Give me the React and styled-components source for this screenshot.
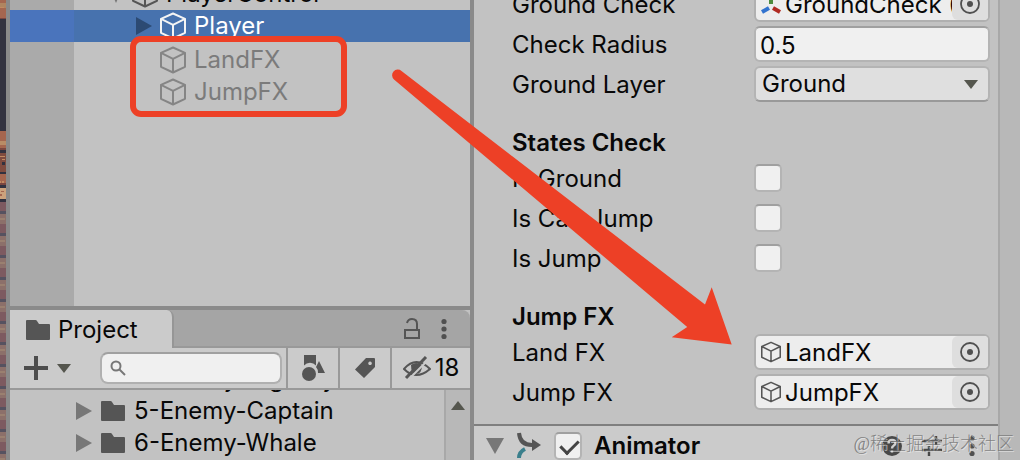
import styled, { createGlobalStyle } from "styled-components";

const bricks = [
  [0, 3, "#a5664f"],
  [3, 5, "#b08560"],
  [8, 10, "#a5664f"],
  [18, 1, "#7a4640"],
  [19, 112, "#323240"],
  [131, 10, "#a5664f"],
  [141, 4, "#b98c66"],
  [145, 3, "#a5664f"],
  [148, 2, "#7a4640"],
  [150, 3, "#323240"],
  [153, 19, "#7f4c40"],
  [172, 2, "#323240"],
  [174, 9, "#a5664f"],
  [183, 2, "#7a4640"],
  [185, 3, "#323240"],
  [188, 11, "#cda27c"],
  [199, 3, "#323240"],
];

const fadedTops = [202, 224, 246, 268, 290, 312, 333, 355, 377, 398, 420, 442];

function Cube({ size = 28 }) {
  return (
    <svg width={size - 2} height={size} viewBox="0 0 26 28" fill="none">
      <path
        d="M13 1.5 25 6.8v14L13 26.5 1 20.8v-14zM1 6.8l12 6 12-6M13 12.8v13.7"
        stroke="currentColor"
        strokeWidth="2"
        strokeLinejoin="round"
      />
    </svg>
  );
}

function Triangle({ down, w = 16, h = 18 }) {
  return (
    <svg width={w} height={h} viewBox="0 0 16 18" preserveAspectRatio="none">
      <path d={down ? "M0 0h16L8 18z" : "M0 0v18l16-9z"} fill="currentColor" />
    </svg>
  );
}

function Folder() {
  return (
    <svg width="24" height="20" viewBox="0 0 24 20">
      <path
        d="M1 0h8.500q1 0 1.500 1l2 3h10q1 0 1 1v14q0 1-1 1H1q-1 0-1-1V1q0-1 1-1z"
        fill="#555"
      />
    </svg>
  );
}

function Dots() {
  return (
    <svg width="6" height="22" viewBox="0 0 6 22" fill="#505050">
      <circle cx="3" cy="3.500" r="2.600" />
      <circle cx="3" cy="11" r="2.600" />
      <circle cx="3" cy="18.500" r="2.600" />
    </svg>
  );
}

function Brickwork() {
  return (
    <svg width="6" height="460" viewBox="0 0 6 460" shapeRendering="crispEdges">
      {bricks.map(([y, h, fill]) => (
        <rect key={y} y={y} width="6" height={h} fill={fill} />
      ))}
      <path
        d="M0 7h4v1H0zM0 156h5v1H0zM2 159h3v1H2zM0 181h1v2H0zM2 181h2v2H2z"
        fill="#c28a62"
      />
      <path d="M2 162h3v3H2z" fill="#323240" />
      <path d="M1 191h3v1H1zM0 194h2v2H0z" fill="#a5664f" />
      <rect y="202" width="6" height="258" fill="#8c706a" />
      {fadedTops.map((y) => (
        <g key={y}>
          <rect y={y} width="6" height="9" fill="#7d5a60" />
          <rect y={y + 9} width="6" height="3" fill="#565260" />
          <rect y={y + 16} width="5" height="2" fill="#9a8070" />
        </g>
      ))}
    </svg>
  );
}

function ObjectField({ id, label, value, icon }) {
  return (
    <Property>
      <label htmlFor={id}>{label}</label>
      <ObjectBox>
        {icon || <Cube size={22} />}
        <input id={id} defaultValue={value} />
        <button aria-label={`Select ${label}`}>
          <svg width="20" height="20" viewBox="0 0 20 20">
            <circle cx="10" cy="10" r="9" fill="none" stroke="#505050" strokeWidth="1.800" />
            <circle cx="10" cy="10" r="3" fill="#505050" />
          </svg>
        </button>
      </ObjectBox>
    </Property>
  );
}

function CheckField({ id, label }) {
  return (
    <Property>
      <label htmlFor={id}>{label}</label>
      <Checkbox id={id} type="checkbox" />
    </Property>
  );
}

function Hierarchy() {
  return (
    <HierarchyPanel>
      <Gutter>
        <GutterMark />
      </Gutter>
      <Tree>
        <TreeRow $indent={34}>
          <Triangle down />
          <Cube />
          <span>PlayerControl</span>
        </TreeRow>
        <TreeRow $indent={62} $selected>
          <Triangle />
          <Cube />
          <span>Player</span>
        </TreeRow>
        <TreeRow $indent={86} $disabled>
          <Cube />
          <span>LandFX</span>
        </TreeRow>
        <TreeRow $indent={86} $disabled>
          <Cube />
          <span>JumpFX</span>
        </TreeRow>
        <Highlight />
      </Tree>
    </HierarchyPanel>
  );
}

function Project() {
  return (
    <ProjectPanel>
      <TabBar>
        <Tab>
          <Folder />
          Project
        </Tab>
        <TabTools>
          <button aria-label="Lock">
            <svg width="18" height="22" viewBox="0 0 18 22" fill="none" stroke="#555" strokeWidth="2">
              <rect x="2" y="12" width="14" height="8" />
              <path d="M4 5q1-4 5-4 5 0 5 5v6" />
            </svg>
          </button>
          <button aria-label="Panel menu">
            <Dots />
          </button>
        </TabTools>
      </TabBar>
      <Toolbar>
        <AddButton aria-label="Create">
          <svg width="24" height="24" viewBox="0 0 24 24">
            <path d="M12 0v24M0 12h24" stroke="#4d4d4d" strokeWidth="4" />
          </svg>
          <Triangle down w={14} h={9} />
        </AddButton>
        <Search>
          <svg width="16" height="16" viewBox="0 0 16 16" fill="none" stroke="#777" strokeWidth="2">
            <circle cx="6" cy="6" r="4.500" />
            <path d="m9 9 6 6" />
          </svg>
          <input type="search" aria-label="Search project" />
        </Search>
        <ToolButton aria-label="Search by type">
          <svg width="24" height="28" viewBox="0 0 24 28" fill="#555">
            <path d="M3 1h12v10.500a8 8 0 0 0-12 0zM18 7l6 12h-7q0-4-2-6z" />
            <circle cx="8" cy="20" r="7" />
          </svg>
        </ToolButton>
        <ToolButton aria-label="Search by label">
          <svg width="20" height="20" viewBox="0 0 20 20" fill="#555">
            <path
              fillRule="evenodd"
              d="M11 0h8q1 0 1 1v8L9 20 0 11.500zM15 3.500a1.800 1.800 0 1 0 .1 0z"
            />
          </svg>
        </ToolButton>
        <ToolButton $wide aria-label="Hidden packages">
          <svg width="28" height="24" viewBox="0 0 28 24" fill="none" stroke="#555" strokeWidth="2">
            <path d="M1 13Q13-1 27 13 13 25 1 13z" />
            <path d="M8 9q0 9 5 9 6 0 6-9-6-4-11 0z" fill="#555" stroke="none" />
            <path d="M5 24 26 3" stroke="#cbcbcb" strokeWidth="2" />
            <path d="M3 22 23 1" strokeWidth="3" />
          </svg>
          18
        </ToolButton>
      </Toolbar>
      <Browser>
        <FileList>
          <FileRow>
            <Triangle />
            <Folder />
            4-Enemy-Big Guy
          </FileRow>
          <FileRow>
            <Triangle />
            <Folder />
            5-Enemy-Captain
          </FileRow>
          <FileRow>
            <Triangle />
            <Folder />
            6-Enemy-Whale
          </FileRow>
        </FileList>
        <ListScroll>
          <svg width="14" height="9" viewBox="0 0 14 9">
            <path d="M7 0l7 9H0z" fill="#55564e" />
          </svg>
        </ListScroll>
      </Browser>
    </ProjectPanel>
  );
}

function Inspector() {
  return (
    <InspectorPanel>
      <Properties>
        <ObjectField
          id="ground-check"
          label="Ground Check"
          value="GroundCheck (Transform)"
          icon={
            <svg width="20" height="22" viewBox="0 0 20 22" strokeWidth="4" fill="none">
              <path d="M10 1v10" stroke="#4d8b3d" />
              <path d="m8 15-7 4" stroke="#3273cf" />
              <path d="m12 15 7 4" stroke="#b02a22" />
            </svg>
          }
        />
        <Property>
          <label htmlFor="radius">Check Radius</label>
          <TextInput id="radius" defaultValue="0.5" />
        </Property>
        <Property>
          <label htmlFor="layer">Ground Layer</label>
          <SelectBox>
            <select id="layer" defaultValue="Ground">
              <option>Ground</option>
            </select>
            <Triangle down w={14} h={9} />
          </SelectBox>
        </Property>
        <Heading>States Check</Heading>
        <CheckField id="is-ground" label="Is Ground" />
        <CheckField id="is-can-jump" label="Is Can Jump" />
        <CheckField id="is-jump" label="Is Jump" />
        <Heading>Jump FX</Heading>
        <ObjectField id="land-fx" label="Land FX" value="LandFX" />
        <ObjectField id="jump-fx" label="Jump FX" value="JumpFX" />
      </Properties>
      <ComponentHeader>
        <Triangle down w={18} h={16} />
        <svg width="26" height="28" viewBox="0 0 26 28" fill="none" strokeWidth="4">
          <path d="M3 1q1 12 13 12" stroke="#555" />
          <path d="M16 7v12l9-6z" fill="#555" />
          <path d="M3 26q0-6 6-9" stroke="#3a7f8c" />
        </svg>
        <Checkbox id="animator" type="checkbox" defaultChecked />
        <label htmlFor="animator">Animator</label>
        <HeaderTools>
          <button aria-label="Help">
            <svg width="20" height="20" viewBox="0 0 20 20">
              <circle cx="10" cy="10" r="10" fill="#484848" />
              <path
                d="M6.500 7.500q0-3.500 3.500-3.500t3.500 3q0 1.500-2 2.800Q10 10.500 10 12.500M10 14v2.500"
                fill="none"
                stroke="#d0d0d0"
                strokeWidth="2.400"
              />
            </svg>
          </button>
          <button aria-label="Presets">
            <svg width="20" height="20" viewBox="0 0 20 20" stroke="#484848" strokeWidth="2.400">
              <path d="M0 5h20M0 14h20M14 0v9M7 10v10" />
            </svg>
          </button>
          <button aria-label="Component menu">
            <Dots />
          </button>
        </HeaderTools>
      </ComponentHeader>
    </InspectorPanel>
  );
}

export default function App() {
  return (
    <>
      <GlobalStyle />
      <Editor>
        <SceneEdge>
          <Brickwork />
        </SceneEdge>
        <LeftDock>
          <Hierarchy />
          <Project />
        </LeftDock>
        <Inspector />
        <InspectorScroll />
        <Arrow viewBox="0 0 340 280">
          <path
            d="M11.500 2 315 235.500l6.700-17.300L341.700 275.500l-60-7.200 15.500-10.300L4 10.500A5.500 5.500 0 0 1 11.500 2z"
            fill="#ed4026"
          />
        </Arrow>
        <Watermark>@稀土掘金技术社区</Watermark>
      </Editor>
    </>
  );
}

const GlobalStyle = createGlobalStyle`
  * {
    box-sizing: border-box;
  }

  body {
    margin: 0;
    background: #8a8a8a;
    color: #080808;
    font-family: Inter, sans-serif;
    font-size: 24px;
    line-height: 30px;
  }

  button, input, select {
    margin: 0;
    padding: 0;
    border: 0;
    background: none;
    color: inherit;
    font: inherit;
    outline: none;
  }

  svg {
    display: block;
    flex-shrink: 0;
  }
`;

const Editor = styled.main`
  position: relative;
  display: grid;
  grid-template-columns: 6px minmax(0, 117fr) minmax(0, 131fr) 22px;
  grid-template-rows: minmax(0, 1fr);
  height: 100vh;
  overflow: hidden;
`;

const SceneEdge = styled.div`
  overflow: hidden;
  background: #8c706a;
`;

const LeftDock = styled.div`
  display: grid;
  grid-template-rows: minmax(0, 51fr) minmax(0, 25fr);
  gap: 4px;
  min-height: 0;
  margin: 0 4px;
`;

const HierarchyPanel = styled.section`
  display: flex;
  overflow: hidden;
  background: #c2c2c2;
`;

const Gutter = styled.div`
  width: 64px;
  padding-top: 10px;
  background: #aaa;
`;

const GutterMark = styled.div`
  height: 32px;
  background: #4a74bc;
`;

const Tree = styled.div`
  position: relative;
  flex: 1;
  margin-top: -22px;
`;

const TreeRow = styled.div`
  display: flex;
  align-items: center;
  gap: 8px;
  height: 32px;
  padding-top: ${({ $disabled }) => ($disabled ? 3 : 0)}px;
  padding-left: ${({ $indent }) => $indent}px;
  background: ${({ $selected }) => ($selected ? "#4772ae" : "transparent")};
  color: ${({ $selected, $disabled }) =>
    $selected ? "#fff" : $disabled ? "#7b7b7b" : "#080808"};

  svg {
    color: ${({ $selected, $disabled }) =>
      $selected ? "#f4f4f4" : $disabled ? "#858585" : "#555"};
  }

  svg:first-child:not(:nth-last-child(2)) {
    color: ${({ $selected }) => ($selected ? "#2c4a73" : "#777")};
  }
`;

const Highlight = styled.div`
  position: absolute;
  top: 58px;
  left: 56px;
  width: 217px;
  height: 81px;
  border: 6px solid #ed4026;
  border-radius: 11px;
`;

const ProjectPanel = styled.section`
  display: flex;
  flex-direction: column;
  overflow: hidden;
  background: #c2c2c2;
`;

const TabBar = styled.header`
  display: flex;
  justify-content: space-between;
  flex-shrink: 0;
  height: 38px;
  background: #a5a5a5;
  border-radius: 0 8px 0 0;
  box-shadow: inset 0 -2px #999;
`;

const Tab = styled.div`
  display: flex;
  align-items: center;
  gap: 8px;
  padding: 2px 34px 0 16px;
  border-right: 2px solid #969696;
  border-radius: 0 7px 0 0;
  background: #cbcbcb;
`;

const TabTools = styled.div`
  display: flex;
  align-items: center;
  gap: 20px;
  padding-right: 23px;
`;

const Toolbar = styled.div`
  display: flex;
  flex-shrink: 0;
  align-items: center;
  height: 42px;
  border-bottom: 2px solid #999;
  background: #cbcbcb;
`;

const AddButton = styled.button`
  display: flex;
  align-items: center;
  gap: 9px;
  margin: 0 29px 0 14px;
  color: #55564e;
`;

const Search = styled.label`
  display: flex;
  flex: 1;
  align-items: center;
  gap: 8px;
  min-width: 0;
  height: 32px;
  margin-right: 4px;
  padding: 0 8px;
  border: 2px solid #b0b0b0;
  border-top-color: #a0a0a0;
  border-radius: 8px;
  background: #f0f0f0;

  input {
    width: 100%;
    min-width: 0;
  }
`;

const ToolButton = styled.button`
  display: flex;
  align-items: center;
  justify-content: center;
  gap: 4px;
  width: ${({ $wide }) => ($wide ? 80 : 52)}px;
  height: 40px;
  border-left: 2px solid #999;
`;

const Browser = styled.div`
  display: flex;
  flex: 1;
  min-height: 0;
  overflow: hidden;
`;

const FileList = styled.div`
  flex: 1;
  margin-top: -27px;
`;

const FileRow = styled.div`
  display: flex;
  align-items: center;
  gap: 9px;
  height: 32px;
  padding-left: 66px;

  svg:first-child {
    color: #777;
  }
`;

const ListScroll = styled.div`
  display: flex;
  justify-content: center;
  width: 26px;
  padding-top: 11px;
  border-left: 2px solid #a8a8a8;
  background: #b8b8b8;
`;

const InspectorPanel = styled.section`
  min-width: 0;
  overflow: hidden;
  background: #c2c2c2;
`;

const Properties = styled.div`
  margin-top: -16px;
  padding: 0 8px 12px 38px;
`;

const Property = styled.div`
  display: grid;
  grid-template-columns: 242px minmax(0, 1fr);
  align-items: center;
  height: 40px;

  label {
    padding-top: 2px;
  }
`;

const Heading = styled.h2`
  margin: 0;
  padding-top: 24px;
  font-size: 24px;
  font-weight: 600;
  line-height: 30px;
`;

const TextInput = styled.input`
  width: 100%;
  height: 36px;
  padding: 2px 4px 0;
  border: 2px solid #b4b4b4;
  border-top-color: #a0a0a0;
  border-radius: 6px;
  background: #f0f0f0;
`;

const ObjectBox = styled.div`
  display: flex;
  align-items: center;
  height: 36px;
  padding-left: 5px;
  overflow: hidden;
  border: 2px solid #b0b0b0;
  border-radius: 6px;
  background: #ededed;
  color: #555;

  input {
    flex: 1;
    min-width: 0;
    padding: 2px 0 0 4px;
    color: #080808;
  }

  button {
    display: flex;
    align-items: center;
    justify-content: center;
    width: 36px;
    height: 32px;
    border-radius: 6px 0 0 6px;
    background: #dedede;
  }
`;

const SelectBox = styled.div`
  display: flex;
  align-items: center;
  height: 36px;
  padding: 0 10px 0 6px;
  border: 2px solid #b4b4b4;
  border-bottom-color: #999;
  border-radius: 6px;
  background: #dfdfdf;

  select {
    flex: 1;
    appearance: none;
  }

  svg {
    color: #55564e;
  }
`;

const Checkbox = styled.input`
  appearance: none;
  width: 28px;
  height: 28px;
  margin: 0;
  border: 2px solid #b4b4b4;
  border-top-color: #a0a0a0;
  border-radius: 5px;
  background: #f0f0f0;

  &:checked::before {
    content: "";
    display: block;
    width: 8px;
    height: 15px;
    margin: 2px 0 0 8px;
    border: solid #444;
    border-width: 0 3px 3px 0;
    transform: rotate(45deg);
  }
`;

const ComponentHeader = styled.header`
  display: flex;
  align-items: center;
  gap: 12px;
  height: 42px;
  padding: 0 23px 0 12px;
  border-top: 2px solid #7f7f7f;
  background: #cbcbcb;
  color: #777;

  label {
    color: #080808;
    font-weight: 600;
  }
`;

const HeaderTools = styled.div`
  display: flex;
  gap: 20px;
  margin-left: auto;

  button:last-child {
    padding-left: 7px;
  }
`;

const InspectorScroll = styled.div`
  border-left: 2px solid #a8a8a8;
  background: #b8b8b8;
`;

const Arrow = styled.svg`
  position: absolute;
  top: 69px;
  left: 390px;
  width: 340px;
  height: 280px;
  overflow: visible;
  pointer-events: none;
`;

const Watermark = styled.div`
  position: absolute;
  right: 6px;
  bottom: 3px;
  color: rgba(110, 110, 110, 0.8);
  font-family: "Liberation Serif", "Noto Sans CJK SC", serif;
  font-size: 18px;
  font-weight: 300;
  line-height: 26px;
  text-shadow: 1px 1px rgba(235, 235, 235, 0.7);
  pointer-events: none;
`;
